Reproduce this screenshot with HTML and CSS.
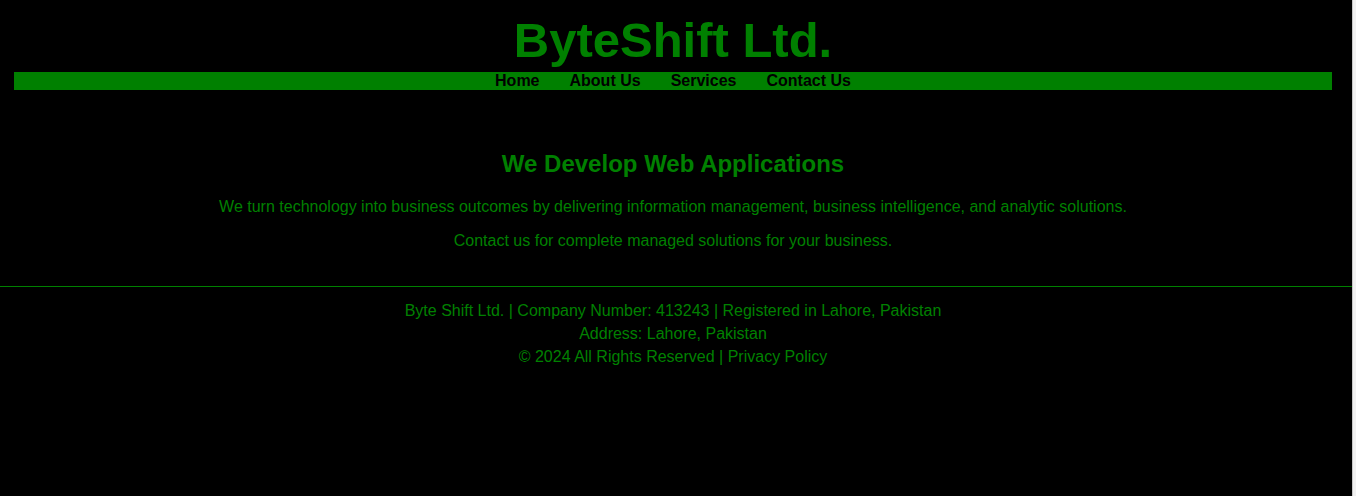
FILE: index.html
```html
<!DOCTYPE html>
<html lang="en">
<head>
<meta charset="utf-8">
<title>ByteShift Ltd.</title>
<link rel="stylesheet" href="styles.css">
</head>
<body>
<header class="site-header">
  <h1 class="brand">ByteShift Ltd.</h1>
  <nav class="nav">
    <a class="nav-link" href="#">Home</a>
    <a class="nav-link" href="#">About Us</a>
    <a class="nav-link" href="#">Services</a>
    <a class="nav-link" href="#">Contact Us</a>
  </nav>
</header>
<main class="hero">
  <h2 class="hero-title">We Develop Web Applications</h2>
  <p class="hero-text">We turn technology into business outcomes by delivering information management, business intelligence, and analytic solutions.</p>
  <p class="hero-text">Contact us for complete managed solutions for your business.</p>
</main>
<footer class="site-footer">
  <div class="footer-inner">
    <div class="footer-line">Byte Shift Ltd. | Company Number: 413243 | Registered in Lahore, Pakistan</div>
    <div class="footer-line">Address: Lahore, Pakistan</div>
    <div class="footer-line">© 2024 All Rights Reserved | Privacy Policy</div>
  </div>
</footer>
</body>
</html>
```
FILE: styles.css
```css
html {
  background: #000;
  border-right: 3px solid #f1f1f1;
  min-height: 100%;
}
body {
  margin: 0;
  background: #000;
  color: #008000;
  font-family: "Liberation Sans", Arial, sans-serif;
  border-right: 1px solid #c8c8c8;
  min-height: 496px;
}
.site-header {
  margin-right: 6px;
  text-align: center;
}
.brand {
  margin: 12px 0 3px;
  font-size: 49px;
  line-height: 57px;
  font-weight: bold;
  color: #008000;
}
.nav {
  margin: 0 14px;
  background: #008000;
  height: 18px;
  display: flex;
  justify-content: center;
  gap: 30px;
}
.nav-link {
  color: #000;
  text-decoration: none;
  font-weight: bold;
  font-size: 16px;
  line-height: 18px;
}
.hero {
  margin-right: 6px;
  padding: 40px 20px 20px;
  text-align: center;
}
.hero-title {
  margin: 20px 0;
  font-size: 24px;
  font-weight: bold;
}
.hero-text {
  margin: 16px 0;
  font-size: 16px;
  line-height: 18px;
}
.site-footer {
  border-top: 1px solid #008000;
  padding: 12px 6px 0 0;
}
.footer-inner {
  text-align: center;
  font-size: 16px;
  line-height: 23px;
}
```
